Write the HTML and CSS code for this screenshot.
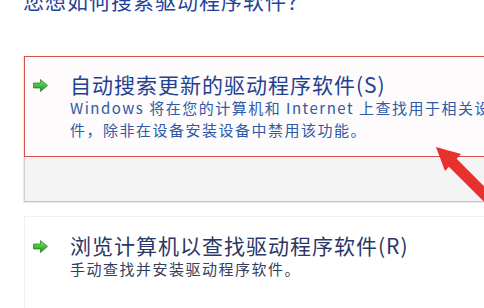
FILE: index.html
```html
<!DOCTYPE html>
<html lang="zh-CN">
<head>
    <meta charset="UTF-8">
    <title>更新驱动程序软件</title>
    <link rel="stylesheet" href="styles.css">
</head>
<body>
    <div class="page">
        <h1 class="question">您想如何搜索驱动程序软件？</h1>

        <div class="option-card">
            <div class="option selected">
                <svg class="go-icon" width="15" height="13" viewBox="0 0 15 13">
                    <defs>
                        <linearGradient id="g1" x1="0" y1="0" x2="0" y2="1">
                            <stop offset="0" stop-color="#7ee866"/>
                            <stop offset="1" stop-color="#13951a"/>
                        </linearGradient>
                    </defs>
                    <path d="M0.5 4 H7.5 V0.5 L14.5 6.5 L7.5 12.5 V9 H0.5 Z" fill="url(#g1)" stroke="#1c7a22" stroke-width="0.7"/>
                </svg>
                <div class="option-text">
                    <div class="option-title">自动搜索更新的驱动程序软件(S)</div>
                    <div class="option-desc">Windows 将在您的计算机和 Internet 上查找用于相关设备的最新驱动程序软<br>件，除非在设备安装设备中禁用该功能。</div>
                </div>
            </div>
            <div class="option-foot"></div>
        </div>

        <div class="option-card plain">
            <div class="option">
                <svg class="go-icon" width="15" height="13" viewBox="0 0 15 13">
                    <defs>
                        <linearGradient id="g2" x1="0" y1="0" x2="0" y2="1">
                            <stop offset="0" stop-color="#7ee866"/>
                            <stop offset="1" stop-color="#13951a"/>
                        </linearGradient>
                    </defs>
                    <path d="M0.5 4 H7.5 V0.5 L14.5 6.5 L7.5 12.5 V9 H0.5 Z" fill="url(#g2)" stroke="#1c7a22" stroke-width="0.7"/>
                </svg>
                <div class="option-text">
                    <div class="option-title">浏览计算机以查找驱动程序软件(R)</div>
                    <div class="option-desc">手动查找并安装驱动程序软件。</div>
                </div>
            </div>
        </div>
    </div>

    <!-- red annotation arrow -->
    <svg class="pointer" width="70" height="80" viewBox="0 0 70 80">
        <path d="M14 14 L66 66" stroke="#e8302c" stroke-width="11"/>
        <path d="M0 1 L25 8 L9 25 Z" fill="#e8302c"/>
    </svg>
</body>
</html>
```

FILE: styles.css
```css
html, body {
    margin: 0;
    background: #fff;
    overflow: hidden;
}
body {
    position: relative;
    width: 484px;
    height: 308px;
    font-family: "Noto Sans CJK SC", "Noto Sans", sans-serif;
}
.page {
    padding-left: 24px;
}
.question {
    margin: -10px 0 0 -1px;
    font-size: 21px;
    line-height: 20px;
    letter-spacing: 1px;
    font-weight: normal;
    color: #24439a;
    white-space: nowrap;
}
.option-card {
    margin-top: 46px;
    width: 480px;
    border-left: 1px solid #d2d2d2;
    border-bottom: 1px solid #c4c4c4;
    box-shadow: -1px 1px 1px #ececec;
}
.option {
    display: flex;
    align-items: flex-start;
    padding: 14px 0 0 8px;
}
.option.selected {
    height: 85px;
    border: 1px solid #d8504c;
    border-right: none;
    margin-left: -1px;
    background: #fdfbfb;
}
.option-foot {
    height: 44px;
    background: #f4f4f4;
}
.go-icon {
    margin-top: 8px;
    flex: none;
}
.option-text {
    margin-left: 22px;
}
.option-title {
    font-size: 21px;
    line-height: 26px;
    letter-spacing: 1px;
    color: #1f4191;
    white-space: nowrap;
}
.option-desc {
    font-size: 15px;
    line-height: 22px;
    letter-spacing: 1.5px;
    color: #2f5aa8;
    white-space: nowrap;
}
.option-card.plain {
    margin-top: 14px;
    height: 120px;
    border-top: 1px solid #f0f0f0;
    border-left: 1px solid #eeeeee;
    border-bottom: none;
    box-shadow: none;
}
.option-card.plain .option {
    padding-top: 15px;
}
.option-card.plain .option-title {
    color: #2b3766;
}
.option-card.plain .option-desc {
    color: #343d5c;
}
.pointer {
    position: absolute;
    left: 436px;
    top: 146px;
}
```
